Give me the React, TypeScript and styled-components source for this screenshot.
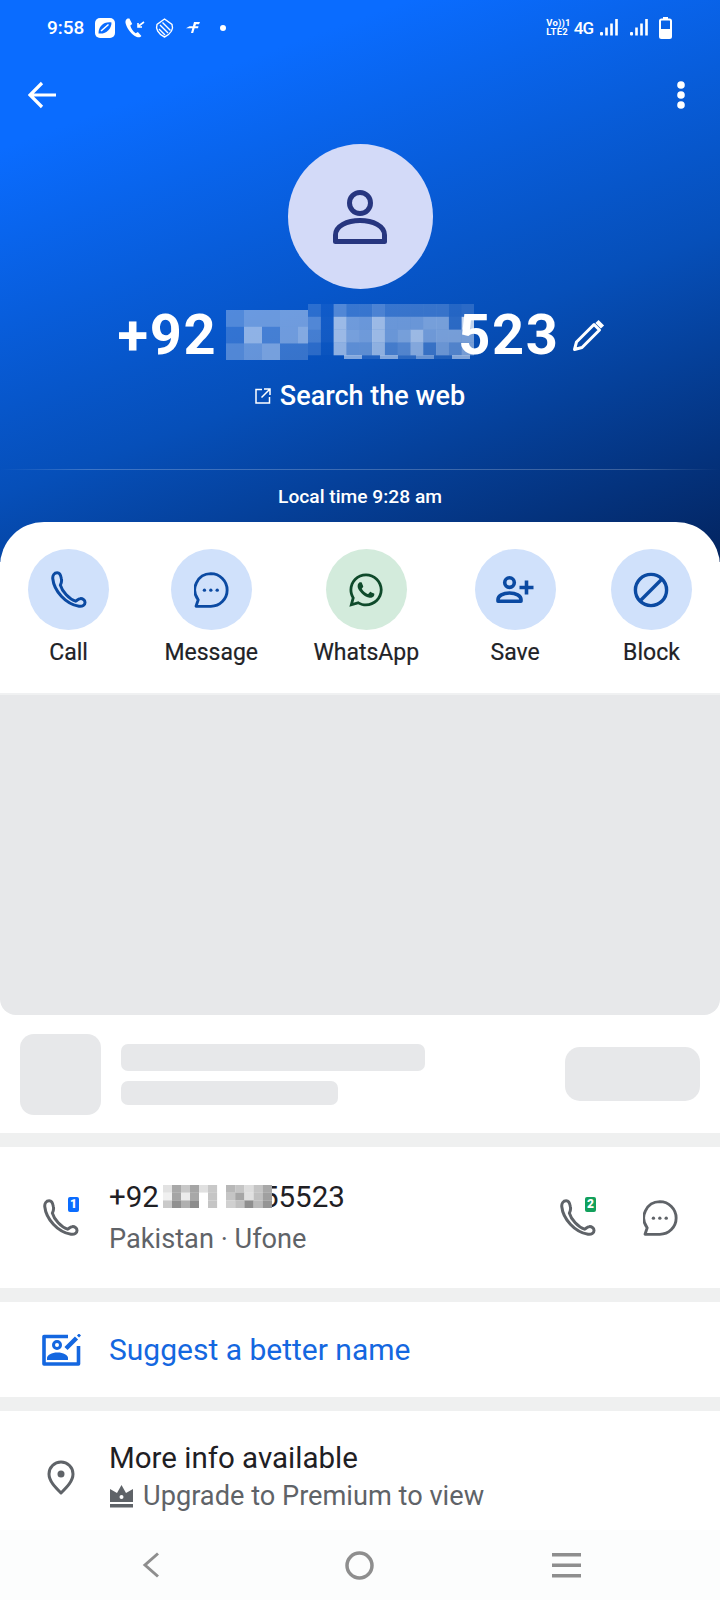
import { ReactNode } from "react";
import styled, { createGlobalStyle } from "styled-components";
import { FaWhatsapp } from "react-icons/fa";

const GlobalStyle = createGlobalStyle`
  html, body {
    margin: 0;
    padding: 0;
    background: #fff;
  }
  body {
    font-family: Roboto, "Liberation Sans", sans-serif;
  }
`;

const Page = styled.div`
  position: relative;
  width: 720px;
  height: 1600px;
  overflow: hidden;
  background: #fff;
  display: flex;
  flex-direction: column;
`;

const Header = styled.header`
  height: 562px;
  flex: none;
  box-sizing: border-box;
  background: linear-gradient(160deg, #0a6cff 18%, #064fb9 60%, #03245f 100%);
  color: #fff;
  display: flex;
  flex-direction: column;
  align-items: stretch;
`;

const StatusBar = styled.div`
  height: 54px;
  box-sizing: border-box;
  padding: 1px 48px 0 47px;
  display: flex;
  align-items: center;
  justify-content: space-between;
`;

const StatusGroup = styled.div`
  display: flex;
  align-items: center;
`;

const Clock = styled.span`
  font-size: 19px;
  font-weight: 500;
  margin-right: 11px;
`;

const StatusIcon = styled.svg<{ $gap?: number }>`
  display: block;
  flex: none;
  margin-right: ${(p) => p.$gap ?? 0}px;
`;

const Volte = styled.div`
  font-size: 9.5px;
  font-weight: 700;
  line-height: 8.5px;
  text-align: left;
  margin-right: 3px;
  letter-spacing: 0.2px;
`;

const NetworkLabel = styled.span`
  font-size: 17px;
  font-weight: 500;
  letter-spacing: -1px;
  margin-right: 7px;
`;

const TopBar = styled.div`
  height: 82px;
  padding: 0 35px 0 28px;
  display: flex;
  align-items: center;
  justify-content: space-between;
`;

const Avatar = styled.div`
  width: 145px;
  height: 145px;
  margin: 8px auto 0;
  border-radius: 50%;
  background: #d3daf8;
  display: flex;
  align-items: center;
  justify-content: center;
`;

const NameRow = styled.div`
  margin-top: 18px;
  height: 56px;
  padding-left: 3px;
  display: flex;
  align-items: center;
  justify-content: center;
  font-size: 56px;
  font-weight: 700;
  line-height: 56px;
  letter-spacing: 1.6px;
`;

const Mosaic = styled.svg<{ $left: number; $top?: number }>`
  display: block;
  flex: none;
  position: relative;
  z-index: 1;
  margin-left: ${(p) => p.$left}px;
  margin-top: ${(p) => p.$top ?? 0}px;
`;

const Tail = styled.span<{ $pull: number }>`
  margin-left: -${(p) => p.$pull}px;
`;

const EditIcon = styled.svg`
  display: block;
  margin-left: 13px;
`;

const WebLink = styled.div`
  margin-top: 15px;
  display: flex;
  align-items: center;
  justify-content: center;
  gap: 9px;
  font-size: 27px;
  font-weight: 500;
  line-height: 36px;
`;

const HeaderRule = styled.div`
  margin-top: 55px;
  height: 1px;
  background: linear-gradient(
    90deg,
    rgba(255, 255, 255, 0) 0%,
    rgba(255, 255, 255, 0.22) 12%,
    rgba(255, 255, 255, 0.22) 88%,
    rgba(255, 255, 255, 0) 100%
  );
`;

const LocalTime = styled.div`
  margin-top: 15px;
  text-align: center;
  font-size: 19.2px;
  font-weight: 500;
  line-height: 24px;
`;

const Sheet = styled.main`
  margin-top: -40px;
  position: relative;
  background: #fff;
  border-radius: 44px 44px 0 0;
  display: flex;
  flex-direction: column;
  flex: 1;
`;

const Actions = styled.div`
  height: 171px;
  box-sizing: border-box;
  padding: 27px 28px 0;
  display: flex;
  justify-content: space-between;
  align-items: flex-start;
`;

const Action = styled.div`
  display: flex;
  flex-direction: column;
  align-items: center;
  gap: 9px;
  min-width: 81px;
`;

const ActionCircle = styled.div<{ $green?: boolean }>`
  width: 81px;
  height: 81px;
  border-radius: 50%;
  background: ${(p) => (p.$green ? "#d3ebdc" : "#d0e1fb")};
  color: ${(p) => (p.$green ? "#0f4a2b" : "#0b4aa2")};
  display: flex;
  align-items: center;
  justify-content: center;
`;

const ActionLabel = styled.span`
  font-size: 23px;
  font-weight: 400;
  line-height: 28px;
  color: #212226;
  -webkit-text-stroke: 0.2px #212226;
`;

const AdBlock = styled.div`
  height: 322px;
  flex: none;
  box-sizing: border-box;
  background: #e7e8ea;
  border-top: 2px solid #f0f1f2;
  border-radius: 0 0 16px 16px;
`;

const AdRow = styled.div`
  height: 118px;
  flex: none;
  box-sizing: border-box;
  padding: 0 20px;
  display: flex;
  align-items: center;
`;

const AdThumb = styled.div`
  width: 81px;
  height: 81px;
  border-radius: 14px;
  background: #e7e8ea;
`;

const AdLines = styled.div`
  margin-left: 20px;
  display: flex;
  flex-direction: column;
  gap: 10px;
  flex: 1;
`;

const AdLine = styled.div<{ $width: number; $height: number }>`
  width: ${(p) => p.$width}px;
  height: ${(p) => p.$height}px;
  border-radius: 7px;
  background: #e7e8ea;
`;

const AdButton = styled.div`
  width: 135px;
  height: 54px;
  border-radius: 15px;
  background: #e7e8ea;
`;

const Separator = styled.div`
  height: 14px;
  flex: none;
  background: #eff0f0;
`;

const InfoRow = styled.div<{ $height: number }>`
  height: ${(p) => p.$height}px;
  flex: none;
  box-sizing: border-box;
  padding: 0 42px 0 43px;
  display: flex;
  align-items: center;
`;

const IconSlot = styled.div`
  position: relative;
  width: 36px;
  margin-right: 30px;
  display: flex;
  align-items: center;
  justify-content: center;
  flex: none;
  color: #5f6368;

  svg {
    flex: none;
  }
`;

const InfoText = styled.div<{ $gap?: number }>`
  flex: 1;
  display: flex;
  flex-direction: column;
  gap: ${(p) => p.$gap ?? 0}px;
`;

const Primary = styled.div<{ $blue?: boolean }>`
  display: flex;
  align-items: center;
  font-size: ${(p) => (p.$blue ? 30 : 29.5)}px;
  line-height: 36px;
  color: ${(p) => (p.$blue ? "#1467e0" : "#1f2024")};
`;

const Secondary = styled.div`
  display: flex;
  align-items: center;
  font-size: 27.2px;
  line-height: 36px;
  color: #5f6368;
`;

const RowActions = styled.div`
  display: flex;
  align-items: center;
  gap: 47px;
  color: #5f6368;
`;

const SimIcon = styled.div`
  position: relative;
  display: flex;
`;

const SimBadge = styled.span<{ $color: string }>`
  position: absolute;
  top: -2px;
  right: 0;
  width: 11px;
  height: 15px;
  border-radius: 2px;
  background: ${(p) => p.$color};
  color: #fff;
  font-size: 12px;
  font-weight: 900;
  line-height: 15px;
  text-align: center;
`;

const CrownIcon = styled.svg`
  display: block;
  flex: none;
  margin-left: 1px;
  margin-right: 10px;
`;

const NavBar = styled.nav`
  position: absolute;
  left: 0;
  right: 0;
  bottom: 0;
  height: 70px;
  background: #fcfdfd;
  display: flex;
  align-items: center;
  justify-content: space-between;
  box-sizing: border-box;
  padding: 0 139px 0 142px;
`;

const NavIcon = styled.svg<{ $shift?: number }>`
  display: block;
  margin-left: ${(p) => p.$shift ?? 0}px;
`;

const Phone = () => (
  <svg width="36" height="37" viewBox="2.2 1.4 20.2 21" fill="none" stroke="currentColor" strokeWidth="1.7" strokeLinejoin="round">
    <path d="M5.6 2.4C3.9 2.4 2.9 3.9 3.1 5.8 3.8 12.6 10.4 20.2 18 21.4c1.9.3 3.4-.6 3.4-2.1 0-1.5-1.5-2.4-2.8-2.2-1 .1-1.8 1-2.6 1.4C12.4 17.4 8.4 13 7.4 9.4c.5-1 .9-2 .6-3.5C7.7 3.9 7.1 2.4 5.6 2.4Z" />
  </svg>
);

const Bubble = () => (
  <svg width="35" height="36" viewBox="2.6 1.2 20.4 21.4" fill="none" stroke="currentColor" strokeWidth="1.7" strokeLinejoin="round">
    <path d="M12.4 2.2a9.6 9.6 0 0 1 0 19.4H3.6l1.3-3.9a9.6 9.6 0 0 1 7.5-15.5Z" />
    <g fill="currentColor" stroke="none">
      <circle cx="8.6" cy="12" r="1" />
      <circle cx="12.4" cy="12" r="1" />
      <circle cx="16.2" cy="12" r="1" />
    </g>
  </svg>
);

const AddPerson = () => (
  <svg width="38" height="27" viewBox="0 0 38 27" fill="none" stroke="currentColor" strokeWidth="3.6">
    <circle cx="13.5" cy="6.6" r="4.8" />
    <path d="M2 25.2v-1.6c0-3.8 5-6.6 11.5-6.6S25 19.8 25 23.6v1.6Z" strokeLinejoin="round" />
    <path d="M30.5 4.5v14M23.5 11.5h14" />
  </svg>
);

const BlockIcon = () => (
  <svg width="36" height="36" viewBox="0 0 36 36" fill="none" stroke="currentColor" strokeWidth="3.4">
    <circle cx="18" cy="18" r="15.6" />
    <path d="M29 7 7 29" />
  </svg>
);

type ActionItem = { label: string; icon: ReactNode; green?: boolean };

const actions: ActionItem[] = [
  { label: "Call", icon: <Phone /> },
  { label: "Message", icon: <Bubble /> },
  { label: "WhatsApp", icon: <FaWhatsapp size={38} />, green: true },
  { label: "Save", icon: <AddPerson /> },
  { label: "Block", icon: <BlockIcon /> },
];

// white opacity of each tile over the blue
const nameLeft = [
  [0.3, 0.4, 0.4, 0.42, 0.42],
  [0.18, 0.55, 0.25, 0.42, 0.5],
  [0.3, 0.38, 0.45, 0.2, 0.2],
];

const nameRight = [
  [0.15, 0.04, 0.3, 0.2, 0.2, 0.28, 0.2, 0.2, 0.2, 0.2, 0.2, 0.12, 0.15],
  [0.3, 0.05, 0.6, 0.42, 0.4, 0.6, 0.4, 0.4, 0.4, 0.45, 0.45, 0.15, 0.75],
  [0.25, 0.05, 0.6, 0.45, 0.42, 0.6, 0.4, 0.45, 0.6, 0.42, 0.45, 0.45, 0.45],
  [0.15, 0.02, 0.55, 0.35, 0.35, 0.55, 0.25, 0.3, 0.5, 0.2, 0.4, 0.3, 0.45],
];

const nameFoot = [0, 0, 0.5, 0.1, 0.5, 0.15, 0.4, 0.1, 0.5];

const NameMosaic = () => (
  <Mosaic $left={9} $top={-6} width="248" height="56" viewBox="0 0 248 56">
    {nameRight.map((row, r) =>
      row.map((o, c) => (
        <rect key={`r${r}-${c}`} x={82 + c * 12.8} y={r * 12.8} width="12.9" height="12.9" fill="#fff" opacity={o} />
      ))
    )}
    {nameFoot.map((o, c) => (
      <rect key={`f${c}`} x={82 + c * 18} y="51" width="18" height="4" fill="#fff" opacity={o} />
    ))}
    {nameLeft.map((row, r) =>
      row.map((o, c) => (
        <rect key={`l${r}-${c}`} x={c * 18} y={6 + r * 16.7} width={c === 4 ? 10 : 18} height="16.8" fill="#fff" opacity={o} />
      ))
    )}
  </Mosaic>
);

const rowLeft = [
  ["#e2e2e2", "#a8a8a8", "#c8c8c8", "#a5a5a5", "#e0e0e0", "#c8c8c8"],
  ["#f0f0f0", "#a5a5a5", "#ebebeb", "#a8a8a8", "#ffffff", "#c5c5c5"],
  ["#c9c9c9", "#909090", "#b0b0b0", "#8c8c8c", "#ffffff", "#c5c5c5"],
];

const rowRight = [
  ["#b8b8b8", "#c5c5c5", "#dddddd", "#c4c4c4", "#a8a8a8"],
  ["#c5c5c5", "#a6a6a6", "#e0e0e0", "#c0c0c0", "#a0a0a0"],
  ["#d0d0d0", "#c0c0c0", "#8f8f8f", "#bbbbbb", "#959595"],
];

const RowMosaic = () => (
  <Mosaic $left={4} width="109" height="23" viewBox="0 0 109 23">
    <rect width="109" height="23" fill="#fff" />
    {rowLeft.map((row, r) =>
      row.map((fill, c) => (
        <rect key={`a${r}-${c}`} x={c * 9} y={r * 7.7} width="9.1" height="7.8" fill={fill} />
      ))
    )}
    {rowRight.map((row, r) =>
      row.map((fill, c) => (
        <rect key={`b${r}-${c}`} x={63 + c * 9.2} y={r * 7.7} width="9.3" height="7.8" fill={fill} />
      ))
    )}
  </Mosaic>
);

const Signal = ({ gap }: { gap: number }) => (
  <StatusIcon $gap={gap} width="18" height="17" viewBox="0 0 18 17" fill="#fff">
    <rect x="0" y="13" width="3" height="3.5" rx="1" />
    <rect x="5.2" y="8.5" width="2.6" height="8" />
    <rect x="10.2" y="4.5" width="2.6" height="12" />
    <rect x="15.2" y="0" width="2.6" height="16.5" />
  </StatusIcon>
);

export default function App() {
  return (
    <Page>
      <GlobalStyle />
      <Header>
        <StatusBar>
          <StatusGroup>
            <Clock>9:58</Clock>
            <StatusIcon $gap={10} width="20" height="20" viewBox="0 0 20 20">
              <rect width="20" height="20" rx="5" fill="#fff" />
              <path d="M3.5 15.5C3.5 8.5 8.5 3.5 16.5 4.5 16.5 11 11 16.5 3.5 15.5Z" fill="#0a6cff" />
              <path d="M6 13 13.5 6.5" stroke="#fff" strokeWidth="1.6" />
            </StatusIcon>
            <StatusIcon $gap={10} width="20" height="20" viewBox="0 0 20 20" fill="none" stroke="#fff">
              <path d="M2.5.5C.5 1.5 0 3.5.8 5.9c1.7 5.3 5.7 10.6 11 13 2 .8 3.7.4 4.6-.8l-3.5-4-2.2 1.2C8 13.5 6 10.7 5.3 7.6l1.9-1.7L4.4.5Z" fill="#fff" stroke="none" />
              <path d="M19 4 13 8.5M13 5V9h4" strokeWidth="1.6" />
            </StatusIcon>
            <StatusIcon $gap={12} width="19" height="20" viewBox="0 0 19 20" fill="none" stroke="#fff" strokeWidth="1.4">
              <path d="M9.5 1 17 6.5c1.5 4-.5 9-7.5 12.5C3 16 .5 10.5 2 6.5Z" />
              <path d="M5 7 13 15M7.5 4.5 15.5 12.5M4 11 10 17" />
            </StatusIcon>
            <StatusIcon $gap={20} width="14" height="11" viewBox="0 0 14 11" fill="#fff">
              <path d="M8 0h6L13 2.2H10L9.3 4.2H12.5L12 6.3H8.6L7.2 11H5L6.3 6.3H0L3.5 4.3H6.9Z" />
            </StatusIcon>
            <StatusIcon width="6" height="6" viewBox="0 0 6 6" fill="#fff">
              <circle cx="3" cy="3" r="3" />
            </StatusIcon>
          </StatusGroup>
          <StatusGroup>
            <Volte>
              Vo))1
              <br />
              LTE2
            </Volte>
            <NetworkLabel>4G</NetworkLabel>
            <Signal gap={12} />
            <Signal gap={11} />
            <StatusIcon width="13" height="22" viewBox="0 0 13 22" fill="none">
              <rect x="4" y="0" width="5" height="2" fill="#fff" />
              <rect x="1" y="2.5" width="11" height="18.5" rx="1.5" stroke="#fff" strokeWidth="2" />
              <rect x="1" y="12" width="11" height="9" fill="#fff" />
            </StatusIcon>
          </StatusGroup>
        </StatusBar>
        <TopBar>
          <svg width="28" height="28" viewBox="0 0 28 28" fill="none" stroke="#fff" strokeWidth="3.2">
            <path d="M28 14H3M14 2 2 14l12 12" />
          </svg>
          <svg width="8" height="28" viewBox="0 0 8 28" fill="#fff">
            <circle cx="4" cy="4" r="3.8" />
            <circle cx="4" cy="14" r="3.8" />
            <circle cx="4" cy="24" r="3.8" />
          </svg>
        </TopBar>
        <Avatar>
          <svg width="54" height="54" viewBox="0 0 54 54" fill="none" stroke="#27367f" strokeWidth="5">
            <circle cx="27" cy="13" r="10.5" />
            <path d="M2.5 51.5V45C2.5 36 14 30.5 27 30.5S51.5 36 51.5 45v6.5Z" strokeLinejoin="round" />
          </svg>
        </Avatar>
        <NameRow>
          <span>+92</span>
          <NameMosaic />
          <Tail $pull={16}>523</Tail>
          <EditIcon width="33" height="33" viewBox="0 0 33 33" fill="none" stroke="#fff" strokeWidth="3">
            <path d="M22 5.5 4.5 23 2.5 30.5 10 28.5 27.5 11Z" strokeLinejoin="round" />
            <path d="M25 2.5 30.5 8" strokeWidth="4.5" />
          </EditIcon>
        </NameRow>
        <WebLink>
          <svg width="16" height="16" viewBox="0 0 16 16" fill="none" stroke="#fff" strokeWidth="1.5">
            <path d="M7 1.5H1V15H14.5V9M9 1H15V7M15 1 6.5 9.5" />
          </svg>
          Search the web
        </WebLink>
        <HeaderRule />
        <LocalTime>Local time 9:28 am</LocalTime>
      </Header>
      <Sheet>
        <Actions>
          {actions.map((item) => (
            <Action key={item.label}>
              <ActionCircle $green={item.green}>{item.icon}</ActionCircle>
              <ActionLabel>{item.label}</ActionLabel>
            </Action>
          ))}
        </Actions>
        <AdBlock />
        <AdRow>
          <AdThumb />
          <AdLines>
            <AdLine $width={304} $height={27} />
            <AdLine $width={217} $height={24} />
          </AdLines>
          <AdButton />
        </AdRow>
        <Separator />
        <InfoRow $height={141}>
          <IconSlot>
            <SimIcon>
              <Phone />
              <SimBadge $color="#0a6cff">1</SimBadge>
            </SimIcon>
          </IconSlot>
          <InfoText $gap={6}>
            <Primary>
              +92
              <RowMosaic />
              <Tail $pull={10}>55523</Tail>
            </Primary>
            <Secondary>Pakistan · Ufone</Secondary>
          </InfoText>
          <RowActions>
            <SimIcon>
              <Phone />
              <SimBadge $color="#12a05c">2</SimBadge>
            </SimIcon>
            <Bubble />
          </RowActions>
        </InfoRow>
        <Separator />
        <InfoRow $height={95}>
          <IconSlot>
            <svg width="39" height="32" viewBox="0 0 39 32" fill="none" stroke="#1467e0" strokeWidth="3.6">
              <path d="M26 2.5H2V30H36.5V12" strokeLinejoin="round" />
              <circle cx="15" cy="11" r="3.5" strokeWidth="3" />
              <path d="M5 26v-2c0-3 4.5-5.5 10.5-5.5S26 21 26 24v2Z" fill="#1467e0" stroke="none" />
              <path d="M24 14.5 34.5 4" strokeWidth="4.5" />
              <path d="M36 2.5 38 .5" strokeWidth="3" />
            </svg>
          </IconSlot>
          <InfoText>
            <Primary $blue>Suggest a better name</Primary>
          </InfoText>
        </InfoRow>
        <Separator />
        <InfoRow $height={132}>
          <IconSlot>
            <svg width="28" height="35" viewBox="0 0 28 35" fill="none" stroke="#5f6368" strokeWidth="3">
              <path d="M14 33C8 27 2 21 2 14a12 12 0 0 1 24 0c0 7-6 13-12 19Z" strokeLinejoin="round" />
              <circle cx="14" cy="14" r="3.5" fill="#5f6368" stroke="none" />
            </svg>
          </IconSlot>
          <InfoText $gap={2}>
            <Primary>More info available</Primary>
            <Secondary>
              <CrownIcon width="23" height="23" viewBox="0 0 23 23" fill="#5f6368">
                <path d="M11.5 0 16 8 23 4V17H0V4L7 8Z" />
                <circle cx="11.5" cy="12" r="2" fill="#fff" />
                <rect y="19" width="23" height="3.5" />
              </CrownIcon>
              Upgrade to Premium to view
            </Secondary>
          </InfoText>
        </InfoRow>
      </Sheet>
      <NavBar>
        <NavIcon width="18" height="26" viewBox="0 0 18 26" fill="none" stroke="#8e8e8e" strokeWidth="3">
          <path d="M16 1.5 3 13l13 11.5" />
        </NavIcon>
        <NavIcon $shift={6} width="29" height="29" viewBox="0 0 29 29" fill="none" stroke="#8e8e8e" strokeWidth="3.5">
          <circle cx="14.5" cy="14.5" r="12.5" />
        </NavIcon>
        <NavIcon width="29" height="26" viewBox="0 0 29 26" fill="#8e8e8e">
          <rect y="1" width="29" height="3.5" />
          <rect y="11.5" width="29" height="3.5" />
          <rect y="22" width="29" height="3.5" />
        </NavIcon>
      </NavBar>
    </Page>
  );
}
